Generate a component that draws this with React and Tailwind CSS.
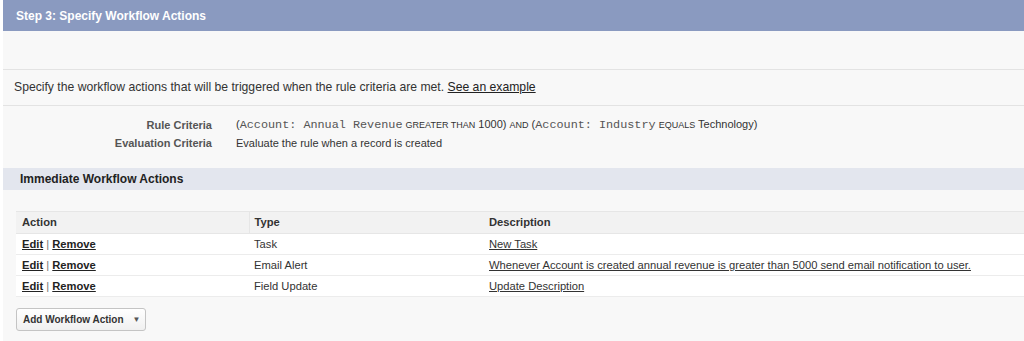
import React from 'react';

const rows = [
  { type: 'Task', desc: 'New Task' },
  { type: 'Email Alert', desc: 'Whenever Account is created annual revenue is greater than 5000 send email notification to user.' },
  { type: 'Field Update', desc: 'Update Description' },
];

const App = () => {
  return (
    <div className="w-[1024px] h-[341px] overflow-hidden bg-white pl-[3px] font-['Liberation_Sans',Arial,sans-serif]">
      <div className="h-full bg-[#f8f8f8]">
        <div className="h-[31px] bg-[#8a9ac0] flex items-center pl-[13px] text-white font-bold text-[12px]">
          Step 3: Specify Workflow Actions
        </div>
        <div className="h-[39px] border-b border-[#e3e3e3]" />
        <div className="h-[36px] border-b border-[#e3e3e3] flex items-center pl-[11px] text-[12.2px] text-[#333]">
          <span>
            Specify the workflow actions that will be triggered when the rule criteria are met.{' '}
            <a href="#" className="underline text-[#222]">See an example</a>
          </span>
        </div>

        <div className="pt-[10px] text-[11px]">
          <div className="flex items-center h-[18px]">
            <div className="w-[209px] text-right font-bold text-[#555]">Rule Criteria</div>
            <div className="pl-[24px] text-[#333] whitespace-nowrap">
              (<span className="font-['Liberation_Mono',monospace] text-[11.8px] text-[#555]">Account: Annual Revenue</span>{' '}
              <span className="text-[9px]">GREATER THAN</span> 1000) <span className="text-[9px]">AND</span> (
              <span className="font-['Liberation_Mono',monospace] text-[11.8px] text-[#555]">Account: Industry</span>{' '}
              <span className="text-[9px]">EQUALS</span> Technology)
            </div>
          </div>
          <div className="flex items-center h-[18px]">
            <div className="w-[209px] text-right font-bold text-[#555]">Evaluation Criteria</div>
            <div className="pl-[24px] text-[#333]">Evaluate the rule when a record is created</div>
          </div>
        </div>

        <div className="mt-[16px] h-[22px] bg-[#e3e6ee] flex items-center pl-[17px] font-bold text-[12px] text-[#222]">
          Immediate Workflow Actions
        </div>

        <div className="pl-[13px] pt-[21px]">
          <table className="w-[1020px] text-[11.2px] border-collapse">
            <thead>
              <tr className="h-[22px] bg-[#f2f2f2] border-t border-[#e0e0e0] border-b border-[#e6e6e6]">
                <th className="w-[233px] text-left font-bold text-[#333] pl-[6px] border-r border-[#e6e6e6]">Action</th>
                <th className="w-[234px] text-left font-bold text-[#333] pl-[5px]">Type</th>
                <th className="text-left font-bold text-[#333] pl-[6px]">Description</th>
              </tr>
            </thead>
            <tbody>
              {rows.map((r) => (
                <tr key={r.type} className="h-[21px] bg-white border-b border-[#ececec]">
                  <td className="pl-[6px] text-[#222]">
                    <a href="#" className="underline font-bold">Edit</a>
                    <span className="text-[#777]"> | </span>
                    <a href="#" className="underline font-bold">Remove</a>
                  </td>
                  <td className="pl-[5px] text-[#333]">{r.type}</td>
                  <td className="pl-[6px] text-[#333]">
                    <a href="#" className="underline">{r.desc}</a>
                  </td>
                </tr>
              ))}
            </tbody>
          </table>
          <button className="mt-[11px] h-[23px] w-[130px] whitespace-nowrap border border-[#c4c4c4] rounded-[3px] bg-gradient-to-b from-white to-[#f0f0f0] flex items-center pl-[6px] text-[10px] font-bold text-[#333]">
            Add Workflow Action
            <span className="ml-[9px] text-[8px] text-[#555]">▼</span>
          </button>
        </div>
      </div>
    </div>
  );
};

export default App;
